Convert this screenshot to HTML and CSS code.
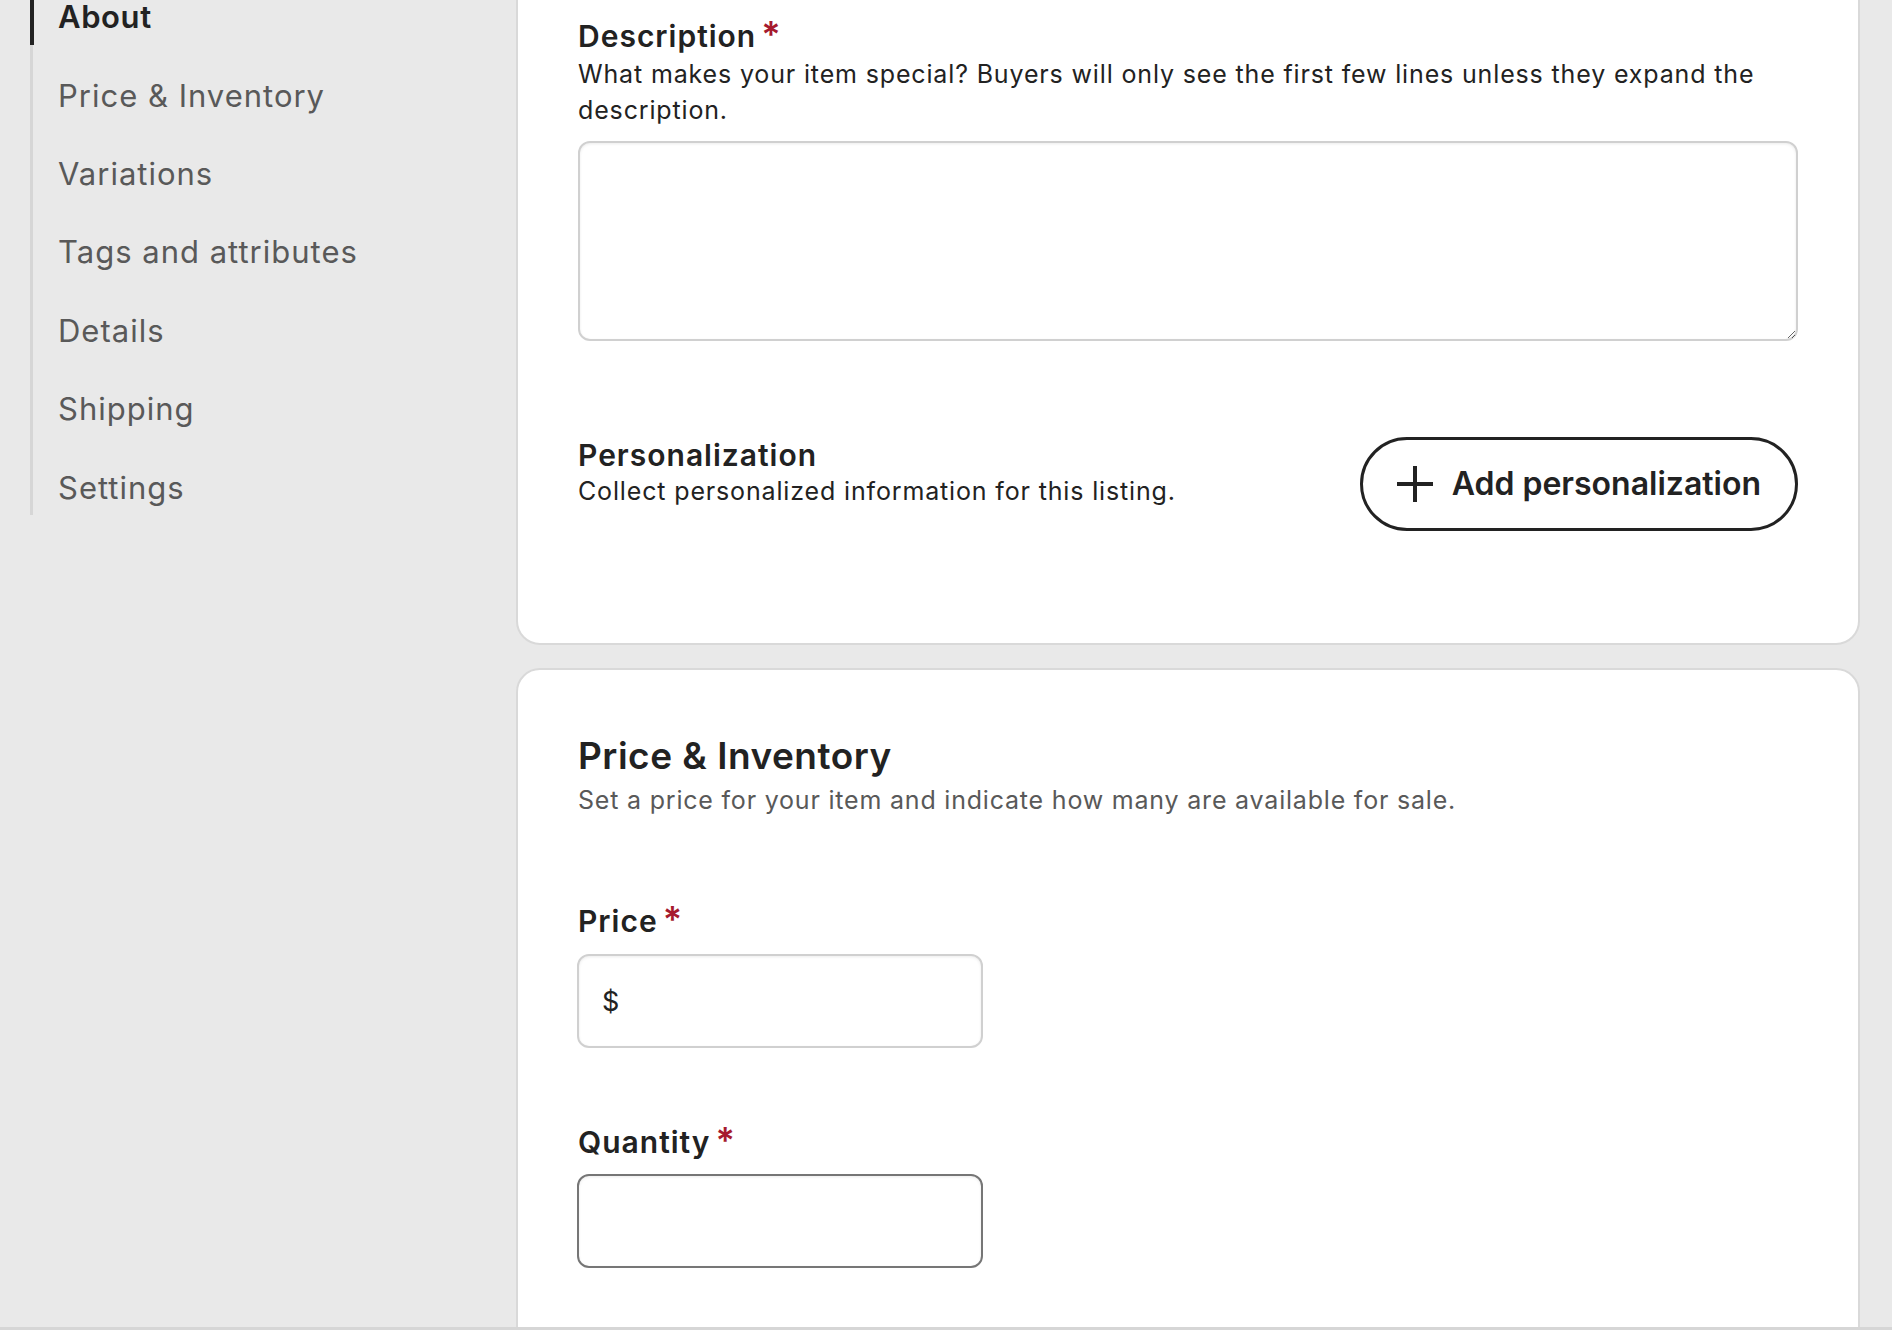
FILE: index.html
```html
<!DOCTYPE html>
<html lang="en">
<head>
<meta charset="utf-8">
<title>Listing editor</title>
<link rel="stylesheet" href="styles.css">
</head>
<body>
<div class="layout">
  <aside class="sidebar">
    <ul class="nav">
      <li class="nav-item active">About</li>
      <li class="nav-item">Price &amp; Inventory</li>
      <li class="nav-item">Variations</li>
      <li class="nav-item">Tags and attributes</li>
      <li class="nav-item">Details</li>
      <li class="nav-item">Shipping</li>
      <li class="nav-item">Settings</li>
    </ul>
  </aside>
  <main class="main">
    <section class="card card-about">
      <div class="field">
        <div class="field-label">Description<span class="req">*</span></div>
        <div class="field-help">What makes your item special? Buyers will only see the first few lines unless they expand the description.</div>
        <textarea class="textarea"></textarea>
      </div>
      <div class="personalize">
        <div class="personalize-text">
          <div class="field-label">Personalization</div>
          <div class="field-help tight">Collect personalized information for this listing.</div>
        </div>
        <button class="btn-outline" type="button">
          <svg class="plus" viewBox="0 0 36 36" width="36" height="36" aria-hidden="true"><path d="M18 0v36M0 18h36" stroke="#222" stroke-width="4" fill="none"/></svg>
          <span>Add personalization</span>
        </button>
      </div>
    </section>
    <section class="card card-price">
      <h2 class="section-title">Price &amp; Inventory</h2>
      <div class="section-sub">Set a price for your item and indicate how many are available for sale.</div>
      <div class="field price-field">
        <div class="field-label">Price<span class="req">*</span></div>
        <div class="text-input">
          <span class="prefix">$</span>
          <input class="bare-input" type="text" aria-label="Price">
        </div>
      </div>
      <div class="field qty-field">
        <div class="field-label">Quantity<span class="req">*</span></div>
        <div class="text-input strong">
          <input class="bare-input" type="text" aria-label="Quantity">
        </div>
      </div>
    </section>
  </main>
</div>
<div class="bottom-rule"></div>
</body>
</html>
```
FILE: styles.css
```css
* { box-sizing: border-box; }
html, body { margin: 0; height: 1330px; overflow: hidden; }
body {
  background: #e9e9e9;
  font-family: Inter, "Noto Sans", "Liberation Sans", sans-serif;
  color: #222222;
}
.layout { display: flex; align-items: flex-start; }
.sidebar { flex: 0 0 516px; }
.nav { list-style: none; margin: -33.4px 0 0 30px; padding: 0; }
.nav-item {
  border-left: 3px solid #d6d6d6;
  padding: 30.6px 0 7.8px 25px;
  font-size: 31px;
  line-height: 40px;
  color: #595959;
  letter-spacing: 1px;
}
.nav-item.active {
  border-left: 4px solid #222222;
  padding-left: 24px;
  color: #222222;
  font-weight: 600;
  letter-spacing: 0.6px;
}
.main { flex: 0 0 1344px; }
.card {
  background: #ffffff;
  border: 2px solid #d9d9d9;
  border-radius: 24px;
  padding-left: 60px;
  padding-right: 60px;
}
.card-about { margin-top: -48.5px; padding-top: 64px; padding-bottom: 112px; }
.card-price { margin-top: 23px; padding-top: 64.5px; padding-bottom: 200px; }
.field-label {
  font-size: 30px;
  line-height: 36px;
  font-weight: 600;
  letter-spacing: 1px;
  color: #222222;
}
.req {
  color: #a61a2e;
  margin-left: 5px;
  font-weight: 600;
  font-size: 36px;
  line-height: 0;
}
.field-help {
  font-size: 25px;
  line-height: 36px;
  letter-spacing: 0.85px;
  margin-top: 2px;
  color: #222222;
}
.field-help.tight { margin-top: 0; }
.textarea {
  display: block;
  width: 100%;
  height: 200px;
  margin-top: 13px;
  border: 2px solid #d0d0d0;
  border-radius: 12px;
  box-shadow: inset 0 1px 3px rgba(0,0,0,0.08);
  resize: vertical;
  font: inherit;
  background: #fff;
}
.personalize {
  display: flex;
  justify-content: space-between;
  align-items: flex-start;
  margin-top: 96px;
}
.btn-outline {
  display: flex;
  align-items: center;
  gap: 19px;
  height: 94px;
  padding: 0 34px;
  border: 3px solid #222222;
  border-radius: 47px;
  background: #ffffff;
  font-family: inherit;
  font-size: 32px;
  font-weight: 600;
  color: #222222;
}
.plus { display: block; flex: none; }
.section-title {
  margin: 0;
  font-size: 37px;
  line-height: 44px;
  font-weight: 600;
  letter-spacing: 0.5px;
  color: #222222;
}
.section-sub {
  font-size: 25px;
  line-height: 36px;
  letter-spacing: 0.8px;
  color: #595959;
  margin-top: 4px;
}
.price-field { margin-top: 85px; }
.qty-field { margin-top: 75.5px; }
.text-input {
  width: 406px;
  height: 94px;
  margin-top: 15px;
  margin-left: -1px;
  border: 2px solid #d0d0d0;
  border-radius: 12px;
  box-shadow: inset 0 1px 3px rgba(0,0,0,0.08);
  display: flex;
  align-items: center;
  padding: 0 23px;
  background: #fff;
}
.qty-field .text-input { margin-top: 14px; }
.text-input.strong { border-color: #767676; }
.prefix { font-size: 27px; color: #222222; margin-right: 8px; }
.bare-input {
  flex: 1;
  min-width: 0;
  border: 0;
  outline: none;
  background: transparent;
  font: inherit;
  font-size: 27px;
  color: #222222;
}
.bottom-rule {
  position: fixed;
  left: 0;
  right: 0;
  bottom: 0;
  height: 3px;
  background: #d6d6d6;
}
```
